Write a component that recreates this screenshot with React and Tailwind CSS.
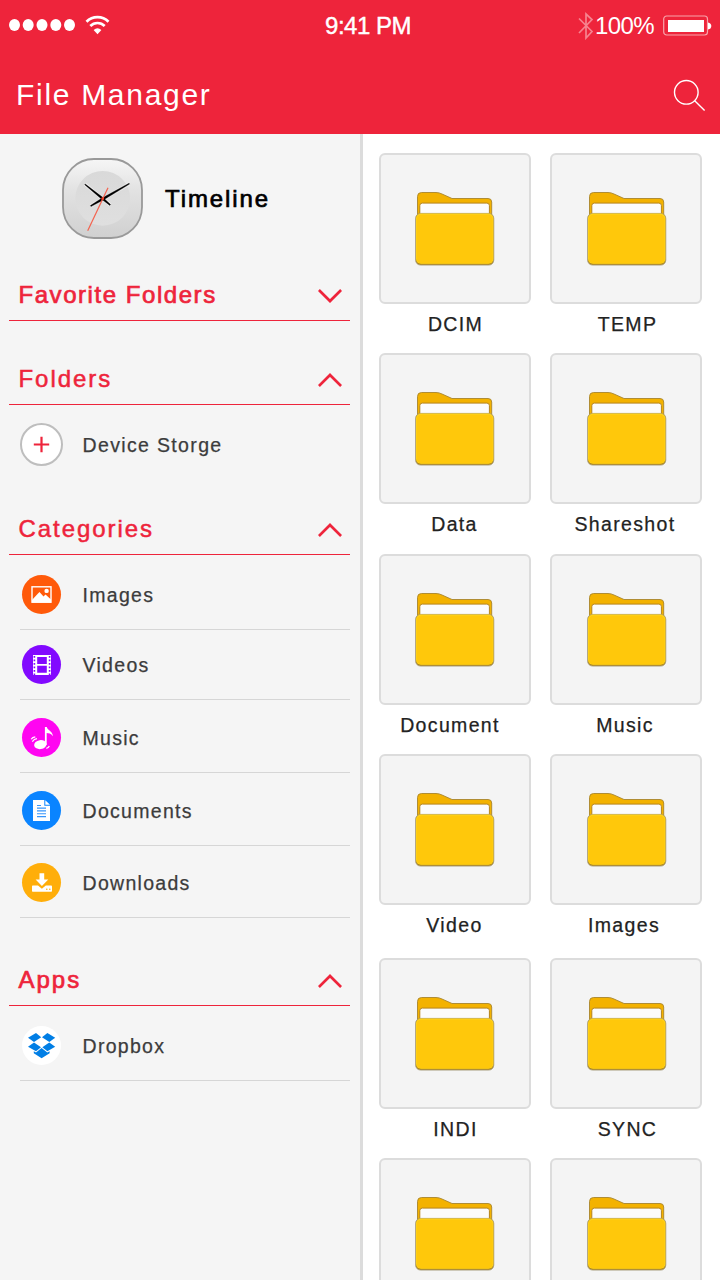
const folders = [
    { name: "DCIM", row: "h-[200px]", shift: "left-[0.5px]" },
    { name: "TEMP", row: "h-[200px]", shift: "left-[1.5px]" },
    { name: "Data", row: "h-[201px]", shift: "left-[-0.5px]" },
    { name: "Shareshot", row: "h-[201px]", shift: "left-[-1px]" },
    { name: "Document", row: "h-[200px]", shift: "left-[-5px]" },
    { name: "Music", row: "h-[200px]", shift: "left-[-1px]" },
    { name: "Video", row: "h-[204px]", shift: "left-[-0.5px]" },
    { name: "Images", row: "h-[204px]", shift: "left-[-2px]" },
    { name: "INDI", row: "h-[200px]", shift: "left-[0.5px]" },
    { name: "SYNC", row: "h-[200px]", shift: "left-[1.5px]" },
    { name: "", row: "h-[200px]", shift: "" },
    { name: "", row: "h-[200px]", shift: "" },
]

const categories = [
    { name: "Images", color: "bg-[#ff5a0a]", height: "h-[75px]", icon: <ImageIcon /> },
    { name: "Videos", color: "bg-[#8209ff]", height: "h-[70px]", icon: <VideoIcon /> },
    { name: "Music", color: "bg-[#ff05f1]", height: "h-[73px]", icon: <MusicIcon /> },
    { name: "Documents", color: "bg-[#0a84ff]", height: "h-[73px]", icon: <DocumentIcon /> },
    { name: "Downloads", color: "bg-[#ffae0a]", height: "h-[72px]", icon: <DownloadIcon /> },
]

function ImageIcon(){
    return(
        <svg width="39" height="39" viewBox="0 0 39 39">
            <rect x="10" y="11.8" width="19" height="15.4" fill="none" stroke="#fff" strokeWidth="1.4" />
            <path d="M10 25 L16 18.5 L17.5 17 L21.5 21.5 L23.5 19.5 L29 24.5 V27.5 H10 Z" fill="#fff" />
            <circle cx="24.6" cy="15.9" r="2.2" fill="#fff" />
        </svg>
    )
}

function VideoIcon(){
    return(
        <svg width="39" height="39" viewBox="0 0 39 39">
            <rect x="11" y="10" width="18" height="20" fill="#fff" />
            <path d="M12.4 11 V30 M27.6 11 V30" stroke="#8209ff" strokeWidth="1.6" strokeDasharray="1.8 1.7" />
            <path d="M15.2 12 h9.6 v7 h-9.6 Z M15.2 20.8 h9.6 v7 h-9.6 Z" fill="#8209ff" />
        </svg>
    )
}

function MusicIcon(){
    return(
        <svg width="39" height="39" viewBox="0 0 39 39" fill="none" stroke="#fff">
            <ellipse cx="18.3" cy="26.6" rx="6.2" ry="4.5" fill="#fff" stroke="none" transform="rotate(-8 18.3 26.6)" />
            <path d="M22.9 9 H24.8 C25.5 12.5 30.2 12.5 31 18.2 C29 15.6 26.5 15 24.7 15 V27 H22.9 Z" fill="#fff" stroke="none" />
            <path d="M9.2 21.3 Q10.4 19 13.3 18.8 M10.3 23.6 Q12 21 15 20.7 M24.3 30.3 Q26.5 30 27.3 28" strokeWidth="1.2" />
        </svg>
    )
}

function DocumentIcon(){
    return(
        <svg width="39" height="39" viewBox="0 0 39 39">
            <path d="M11 9 H22.3 V14.7 H28 V30 H11 Z M23.3 9.3 L28 13.8 H23.3 Z" fill="#fff" />
            <path d="M15 14.5 h4 M15 17.1 h9 M15 19.9 h9 M15 22.7 h9 M15 25.6 h9" stroke="#3795fb" strokeWidth="1.1" />
        </svg>
    )
}

function DownloadIcon(){
    return(
        <svg width="39" height="39" viewBox="0 0 39 39">
            <path d="M17.5 10.3 H22.2 V16.5 H26.3 L19.9 23 L13.6 16.5 H17.5 Z" fill="#fff" />
            <path d="M10.7 22.5 H16 L19.9 25.7 L23.8 22.5 H29.2 Q30 22.5 30 23.4 V28 Q30 28.8 29.2 28.8 H10.7 Q10 28.8 10 28 V23.4 Q10 22.5 10.7 22.5 Z" fill="#fff" />
            <circle cx="24.8" cy="26.3" r="0.8" fill="#ffae0a" />
            <circle cx="27.8" cy="26.3" r="0.8" fill="#ffae0a" />
        </svg>
    )
}

function DropboxIcon(){
    return(
        <svg width="39" height="39" viewBox="0 0 39 39" fill="#007ee5">
            <path d="M14 7 L19.2 11.3 L12 16 L6 11.8 Z" />
            <path d="M25.4 7 L20 11.3 L27.3 16 L33.2 11.8 Z" />
            <path d="M6 20.8 L12 16.4 L19 21.2 L14 25.3 Z" />
            <path d="M33.2 20.8 L27.3 16.4 L20.3 21.2 L25.4 25.3 Z" />
            <path d="M19.6 21.9 L25.3 26.4 L27.6 25.2 V27.2 L19.6 32.2 L11.8 27.2 V25.2 L14 26.4 Z" />
        </svg>
    )
}

function Chevron({ up }){
    return(
        <svg className="relative top-[1px]" width="24" height="14" viewBox="0 0 24 14" fill="none" stroke="#ee243b" strokeWidth="2.7">
            {up ? <path d="M0.9 13 L12 2 L23.1 13" /> : <path d="M0.9 1 L12 12 L23.1 1" />}
        </svg>
    )
}

function Clock(){
    return(
        <svg width="81" height="81" viewBox="0 0 81 81">
            <defs>
                <linearGradient id="face" x1="0" y1="0" x2="0" y2="1">
                    <stop offset="0" stopColor="#f6f6f6" />
                    <stop offset="0.4" stopColor="#e2e2e2" />
                    <stop offset="1" stopColor="#d0d0d0" />
                </linearGradient>
                <linearGradient id="dial" x1="0" y1="0" x2="0" y2="1">
                    <stop offset="0" stopColor="#d9d9d9" />
                    <stop offset="1" stopColor="#dfdfdf" />
                </linearGradient>
            </defs>
            <rect x="1" y="1" width="79" height="79" rx="31" fill="url(#face)" stroke="#999" strokeWidth="1.8" />
            <circle cx="40.7" cy="40.3" r="27.4" fill="url(#dial)" />
            <path d="M23 26.3 L48.3 47 M67.3 25.7 L28.7 48" stroke="#fff" strokeWidth="3.4" strokeOpacity="0.6" />
            <path d="M23.3 26 L41.3 39.8 L48.6 46.5 L47.8 47.4 L40 41.5 L22.7 26.7 Z M67 25.2 L67.6 26.1 L41.4 42 L29 48.6 L28.4 47.5 L40 40 Z" fill="#000" stroke="#000" strokeWidth="0.3" />
            <path d="M25.7 72.7 L46 29.7" stroke="#f4634f" strokeWidth="1.2" />
            <circle cx="40.7" cy="40.7" r="1.4" fill="#f13a20" />
        </svg>
    )
}

function FolderIcon(){
    return(
        <svg width="80" height="76" viewBox="0 0 80 76">
            <path d="M2.5 24 V5.5 Q2.5 1.5 6.5 1.5 H21 Q24 1.5 27 3 L37 7.5 H73 Q76.7 7.5 76.7 11 V24 Z" fill="#f3b200" stroke="#a8842c" strokeWidth="0.9" />
            <rect x="4.8" y="12.1" width="69.6" height="14" rx="2.5" fill="#fcfcfc" stroke="#b5841c" strokeWidth="1" />
            <rect x="0.6" y="22.4" width="78.2" height="51.7" rx="5" fill="#b48a1b" stroke="#a59a78" strokeWidth="0.8" />
            <rect x="1" y="22.6" width="77.4" height="50.2" rx="5" fill="#fed21a" />
            <rect x="1.8" y="23.8" width="75.8" height="48.5" rx="4.5" fill="#ffc80b" />
        </svg>
    )
}

function StatusBar(){
    return(
        <div className="grid grid-cols-3 h-[52px] pl-[9px] pr-[8px] text-2xl leading-none text-white">
            <div className="flex items-center">
                <svg width="68" height="14" viewBox="0 0 68 14" fill="#fff">
                    <ellipse cx="5.5" cy="6" rx="5.5" ry="5.9" />
                    <ellipse cx="19.2" cy="6" rx="5.5" ry="5.9" />
                    <ellipse cx="33" cy="6" rx="5.5" ry="5.9" />
                    <ellipse cx="46.8" cy="6" rx="5.5" ry="5.9" />
                    <ellipse cx="60.5" cy="6" rx="5.5" ry="5.9" />
                </svg>
                <svg className="ml-[8px] mt-[-3px]" width="26" height="20" viewBox="0 0 26 20" fill="none" stroke="#fff">
                    <path d="M1.5 6.8 A15.5 15.5 0 0 1 23.5 6.8" strokeWidth="2.7" />
                    <path d="M5.3 11 A10.2 10.2 0 0 1 19.7 11" strokeWidth="2.7" />
                    <path d="M8.6 15.1 Q12.5 11.6 16.4 15.1 L12.5 19.2 Z" fill="#fff" stroke="none" />
                </svg>
            </div>
            <div className="flex items-center justify-center pl-[15px] tracking-[-0.5px] [-webkit-text-stroke:0.4px_white]">9:41 PM</div>
            <div className="flex items-center justify-end">
                <svg className="mt-[-1px]" width="16" height="28" viewBox="0 0 16 28" fill="none" stroke="#f6838f" strokeWidth="1.7">
                    <path d="M1 6.5 L14 19.5 L8 26 V2 L14 7.5 L1 21" />
                </svg>
                <span className="ml-[1px] tracking-[-0.6px]">100%</span>
                <svg className="ml-[9px] mt-[-1px]" width="49" height="22" viewBox="0 0 49 22">
                    <rect x="0.7" y="1" width="43.8" height="19" rx="3" fill="none" stroke="#f8a3ab" strokeWidth="1.2" />
                    <rect x="5" y="5" width="36" height="12" fill="#fff" />
                    <path d="M45 7.5 Q48.3 8 48.3 11 Q48.3 14 45 14.5 Z" fill="#fff" />
                </svg>
            </div>
        </div>
    )
}

function SectionTitle({ title, up, style = "tracking-[1.95px] [-webkit-text-stroke:0.5px_#ee243b]" }){
    return(
        <div className="flex items-center justify-between h-[51px] ml-[9px] mr-[10px] pl-[9.5px] pr-[8px] border-b border-[#ee243b]">
            <h2 className={`text-2xl leading-none text-[#ee243b] ${style}`}>{title}</h2>
            <Chevron up={up} />
        </div>
    )
}

function SideItem({ name, color, height, icon }){
    return(
        <div className={`flex items-end ml-[20px] mr-[10px] pl-[2px] pb-[15px] border-b border-[#d6d6d6] ${height}`}>
            <div className={`size-[39px] rounded-full ${color}`}>{icon}</div>
            <span className="ml-[21.5px] text-[19.5px] leading-[37px] tracking-[1.3px] text-[#3c3c3c] [-webkit-text-stroke:0.25px_#3c3c3c]">{name}</span>
        </div>
    )
}

function Sidebar(){
    return(
        <aside className="w-[363px] shrink-0 border-r-[3px] border-[#dcdcdc] bg-[#f5f5f5]">
            <div className="flex items-start h-[136px] pt-[24px] pl-[62px]">
                <Clock />
                <span className="ml-[22px] text-2xl leading-[81px] tracking-[1.9px] text-black [-webkit-text-stroke:0.7px_black]">Timeline</span>
            </div>

            <SectionTitle title="Favorite Folders" style="tracking-[1.55px] [-webkit-text-stroke:0.7px_#ee243b]" />

            <div className="mt-[33px]">
                <SectionTitle title="Folders" up />
                <div className="flex items-center h-[79px] pl-[20px]">
                    <div className="flex items-center justify-center size-[43px] rounded-full border-2 border-[#bebebe] bg-white">
                        <svg width="17" height="17" viewBox="0 0 17 17" stroke="#ee243b" strokeWidth="2.2">
                            <path d="M8.5 0.8 V16.2 M0.8 8.5 H16.2" />
                        </svg>
                    </div>
                    <span className="ml-[19.5px] pt-[2px] text-[19.5px] tracking-[1.35px] text-[#3c3c3c] [-webkit-text-stroke:0.25px_#3c3c3c]">Device Storge</span>
                </div>
            </div>

            <div className="mt-[20px]">
                <SectionTitle title="Categories" up />
                {categories.map(item => <SideItem key={item.name} {...item} />)}
            </div>

            <div className="mt-[37px]">
                <SectionTitle title="Apps" up style="tracking-[2px] [-webkit-text-stroke:0.7px_#ee243b]" />
                <SideItem name="Dropbox" color="bg-white" height="h-[75px]" icon={<DropboxIcon />} />
            </div>
        </aside>
    )
}

function App(){
    return(
        <div className="flex flex-col w-[720px] h-[1280px] overflow-hidden bg-white font-['Liberation_Sans',Arial,sans-serif]">
            <header className="h-[134px] shrink-0 bg-[#ee243b]">
                <StatusBar />
                <div className="flex items-center justify-between h-[86px] pl-[16px] pr-[14px]">
                    <h1 className="text-3xl leading-none tracking-[1.7px] text-white">File Manager</h1>
                    <svg width="33" height="33" viewBox="0 0 33 33" fill="none" stroke="#fff" strokeWidth="1.4">
                        <circle cx="13.3" cy="13.3" r="11.8" />
                        <path d="M21.7 21.7 L31.6 31.6" />
                    </svg>
                </div>
            </header>

            <div className="flex grow min-h-0">
                <Sidebar />

                <main className="grid grid-cols-[152px_152px] gap-x-[19px] content-start pt-[19px] pl-[16px]">
                    {folders.map((folder, index) =>
                        <div key={index} className={`flex flex-col items-center ${folder.row}`}>
                            <div className={`flex items-center justify-center w-[152px] h-[151px] shrink-0 rounded-md border-2 border-[#dcdcdc] bg-[#f4f4f4] ${index % 2 ? "pl-[2px]" : ""}`}>
                                <FolderIcon />
                            </div>
                            {folder.name &&
                                <span className={`relative mt-[9px] text-[19.5px] leading-[22px] tracking-[1.35px] text-[#222] [-webkit-text-stroke:0.25px_#222] ${folder.shift}`}>{folder.name}</span>
                            }
                        </div>
                    )}
                </main>
            </div>
        </div>
    )
}

export default App
